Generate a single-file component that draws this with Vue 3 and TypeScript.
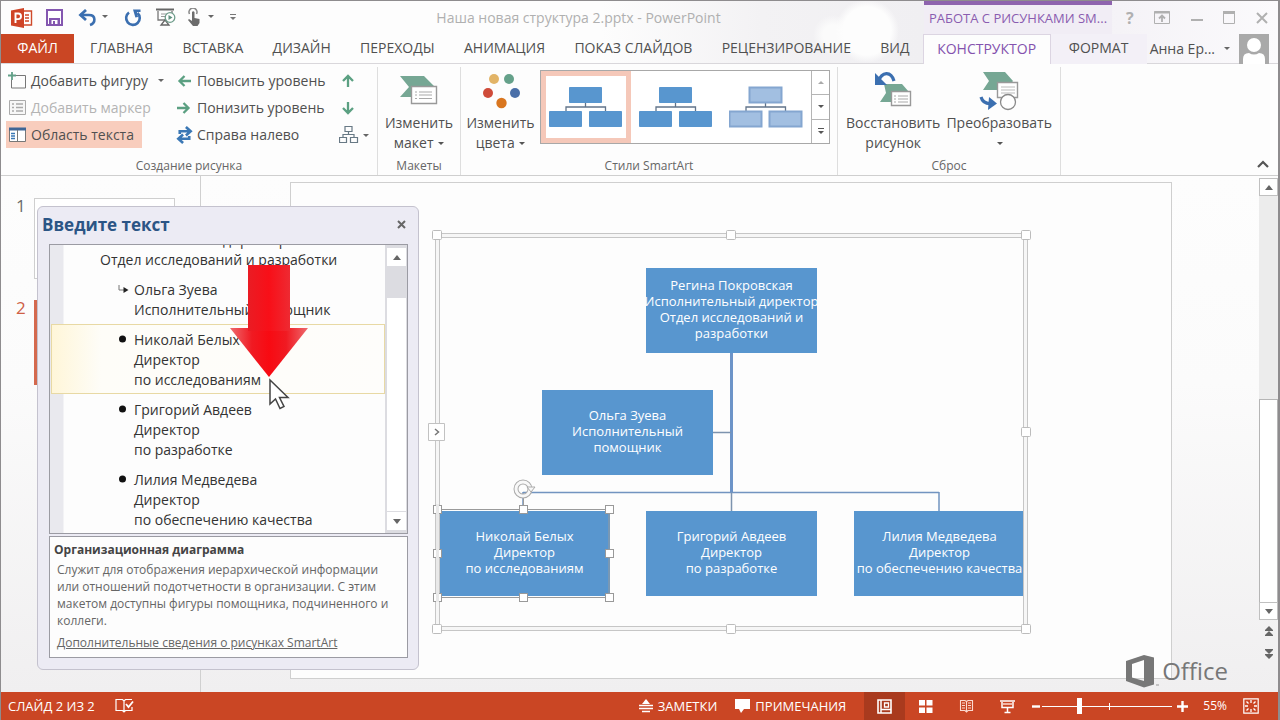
<script setup lang="ts">
import { ref } from 'vue'

interface OrgNode {
  id: string
  x: number
  y: number
  lines: string[]
}

interface OutlineItem {
  kind: 'root' | 'assistant' | 'bullet'
  lines: string[]
  active?: boolean
}

const tabs: string[] = ['ГЛАВНАЯ', 'ВСТАВКА', 'ДИЗАЙН', 'ПЕРЕХОДЫ', 'АНИМАЦИЯ', 'ПОКАЗ СЛАЙДОВ', 'РЕЦЕНЗИРОВАНИЕ', 'ВИД']

const nodes: OrgNode[] = [
  { id: 'head', x: 216, y: 40, lines: ['Регина Покровская', 'Исполнительный директор', 'Отдел исследований и', 'разработки'] },
  { id: 'assistant', x: 112, y: 162, lines: ['Ольга Зуева', 'Исполнительный', 'помощник'] },
  { id: 'research', x: 9, y: 283, lines: ['Николай Белых', 'Директор', 'по исследованиям'] },
  { id: 'development', x: 216, y: 283, lines: ['Григорий Авдеев', 'Директор', 'по разработке'] },
  { id: 'quality', x: 424, y: 283, lines: ['Лилия Медведева', 'Директор', 'по обеспечению качества'] },
]

const outline: OutlineItem[] = [
  { kind: 'root', lines: ['Исполнительный директор', 'Отдел исследований и разработки'] },
  { kind: 'assistant', lines: ['Ольга Зуева', 'Исполнительный помощник'] },
  { kind: 'bullet', lines: ['Николай Белых', 'Директор', 'по исследованиям'], active: true },
  { kind: 'bullet', lines: ['Григорий Авдеев', 'Директор', 'по разработке'] },
  { kind: 'bullet', lines: ['Лилия Медведева', 'Директор', 'по обеспечению качества'] },
]

const frameHandles: number[][] = [[7, 7], [301, 7], [596, 7], [596, 204], [596, 401], [301, 401], [7, 401]]
const nodeHandles: number[][] = [[7, 281], [93, 281], [179, 281], [7, 325], [179, 325], [7, 369], [93, 369], [179, 369]]

const zoom = ref(28)
</script>

<template>
  <div class="window">
    <header class="head">
      <div class="title-row">
        <div class="quick">
          <svg class="app-icon" width="22" height="20" viewBox="0 0 22 20">
            <path d="M11 3h9.500v14H11z" fill="#fff" stroke="#cf4a2b" stroke-width="1.400" />
            <path d="M14 7h4M14 10h4M14 13h4" stroke="#cf4a2b" stroke-width="1.400" />
            <path d="M0 2.500 13 0v20L0 17.500z" fill="#cf4427" />
            <path d="M4.500 15V5.500h2.700a2.800 2.800 0 0 1 0 5.600H4.500" fill="none" stroke="#fff" stroke-width="1.900" />
          </svg>
          <button class="qb save" aria-label="Сохранить">
            <svg width="17" height="17" viewBox="0 0 17 17"><path d="M1 1h15v15H1z" fill="#fff" stroke="#8457b0" stroke-width="2" /><path d="M3 9h11v7H3z" fill="#8457b0" /><path d="M5.500 11h6v4h-6z" fill="#fff" /><path d="M7 12h2v3H7z" fill="#8457b0" /></svg>
          </button>
          <button class="qb undo" aria-label="Отменить">
            <svg width="30" height="18" viewBox="0 0 30 18"><path d="M2 6h9c7 0 7 8 1 10" fill="none" stroke="#3b6fb0" stroke-width="2.600" /><path d="M8 1 2.500 6 8 11" fill="none" stroke="#3b6fb0" stroke-width="2.800" /><path d="M24 6h6l-3 3z" fill="#666" /></svg>
          </button>
          <button class="qb redo" aria-label="Повторить">
            <svg width="18" height="18" viewBox="0 0 18 18"><path d="M5 3.500a6.800 6.800 0 1 0 8.500.5" fill="none" stroke="#3b6fb0" stroke-width="2.600" /><path d="M9 .5h7.500V3h-3.500l1 5-2.600.6z" fill="#3b6fb0" /></svg>
          </button>
          <button class="qb show" aria-label="Показ слайдов">
            <svg width="20" height="19" viewBox="0 0 20 19"><path d="M0 1.500h18" stroke="#666" stroke-width="2" /><path d="M2 3v9h8M16 3v3" fill="none" stroke="#777" stroke-width="1.300" /><path d="M5 6h6M5 8.500h4" stroke="#999" /><path d="m9 12-4 5h8z" fill="none" stroke="#666" stroke-width="1.300" /><circle cx="14" cy="9.500" r="4.800" fill="#fff" stroke="#6f9d8b" stroke-width="1.300" /><path d="m12.500 7 4 2.500-4 2.500z" fill="#5f917e" /></svg>
          </button>
          <button class="qb touch" aria-label="Режим касания">
            <svg width="28" height="19" viewBox="0 0 28 19"><path d="M2.500 6a4 4 0 1 1 7 0" fill="none" stroke="#888" stroke-width="1.500" /><path d="M5 4q1.200-1.500 2.500 0v6l5 1v4l-2 3H6l-5-6 1-1 3 2z" fill="#6c6c6c" /><path d="M21 7h6l-3 3z" fill="#666" /></svg>
          </button>
          <button class="qb more" aria-label="Настроить панель">
            <svg width="6" height="8" viewBox="0 0 6 8"><path d="M0 .5h6" stroke="#777" /><path d="M0 3h6L3 6z" fill="#777" /></svg>
          </button>
        </div>
        <h1 class="doc-title">Наша новая структура 2.pptx - PowerPoint</h1>
        <div class="context-title">РАБОТА С РИСУНКАМИ SM...</div>
        <div class="win-controls">
          <button aria-label="Справка" class="help">?</button>
          <button aria-label="Параметры ленты"><svg width="16" height="13" viewBox="0 0 16 13"><path d="M.5.500h15v12H.5z" fill="none" stroke="#b0b0b0" /><path d="M0 1.500h16" stroke="#b0b0b0" stroke-width="2" /><path d="M8 11V5M5 7.500 8 4.500l3 3" fill="none" stroke="#b0b0b0" stroke-width="1.800" /></svg></button>
          <button aria-label="Свернуть"><svg width="12" height="13" viewBox="0 0 12 13"><path d="M0 9h12" stroke="#b0b0b0" stroke-width="2" /></svg></button>
          <button aria-label="Развернуть"><svg width="12" height="13" viewBox="0 0 12 13"><path d="M.5 1.500h11v11H.5z" fill="none" stroke="#b0b0b0" /><path d="M0 1.500h12" stroke="#b0b0b0" stroke-width="3" /></svg></button>
          <button aria-label="Закрыть"><svg width="12" height="12" viewBox="0 0 12 12"><path d="m1 1 10 10M11 1 1 11" stroke="#b0b0b0" stroke-width="2" /></svg></button>
        </div>
      </div>
      <div class="tab-row">
        <button class="file-tab">ФАЙЛ</button>
        <nav class="tabs">
          <button v-for="tab in tabs" :key="tab" class="tab">{{ tab }}</button>
        </nav>
        <button class="tab design">КОНСТРУКТОР</button>
        <button class="tab format">ФОРМАТ</button>
        <button class="account">
          <span>Анна Ер...</span>
          <svg width="6" height="4" viewBox="0 0 6 4"><path d="M0 0h6L3 3z" fill="#666" /></svg>
          <svg class="avatar" width="30" height="30" viewBox="0 0 30 30"><path d="M0 0h30v30H0z" fill="#a9a9a9" /><circle cx="15" cy="11" r="7" fill="#fff" /><path d="M4 30v-5q0-6 6-6 5 3 10 0 6 0 6 6v5z" fill="#fff" /></svg>
        </button>
      </div>
    </header>

    <section class="ribbon" aria-label="Конструктор">
      <div class="group g-create">
        <div class="create">
          <div class="col col-a">
            <button class="cmd">
              <svg width="19" height="18" viewBox="0 0 19 18"><path d="M3 3.500h14.500v12.500H3.500V8" fill="none" stroke="#777" /><path d="M0 3.500h8M4 0v8" stroke="#fff" stroke-width="3.500" /><path d="M0 3.500h8M4 0v8" stroke="#62a088" stroke-width="1.800" /></svg>
              <span>Добавить фигуру</span>
              <svg class="caret" width="6" height="4" viewBox="0 0 6 4"><path d="M0 0h6L3 3z" fill="#666" /></svg>
            </button>
            <button class="cmd" disabled>
              <svg width="19" height="18" viewBox="0 0 19 18"><path d="M1.500 1.500h16v14h-16z" fill="#f7f7f7" stroke="#aaa" /><path d="M4 5h2M4 8.500h2M4 12h2M8 5h7M8 8.500h7M8 12h7" stroke="#aaa" stroke-width="1.400" /></svg>
              <span>Добавить маркер</span>
            </button>
            <button class="cmd pressed">
              <svg width="19" height="18" viewBox="0 0 19 18"><path d="M1.500 2.500h16v13h-16z" fill="#fff" stroke="#777" /><path d="M1 3h17" stroke="#3f6696" stroke-width="3" /><path d="M9.500 4v12" stroke="#777" /><path d="M3 7.500h4M3 10h4M3 12.500h4" stroke="#3b78b5" stroke-width="1.400" /></svg>
              <span>Область текста</span>
            </button>
          </div>
          <div class="col col-b">
            <button class="cmd"><svg width="15" height="14" viewBox="0 0 15 14"><path d="M14 7H3M7.500 2 2.500 7l5 5" fill="none" stroke="#5ba082" stroke-width="2.300" /></svg><span>Повысить уровень</span></button>
            <button class="cmd"><svg width="15" height="14" viewBox="0 0 15 14"><path d="M0 7h11M6.500 2l5 5-5 5" fill="none" stroke="#5ba082" stroke-width="2.300" /></svg><span>Понизить уровень</span></button>
            <button class="cmd"><svg width="18" height="20" viewBox="0 0 18 20"><path d="M4 9V6h11M10.500 1.500 15.500 6l-5 4.500M14 11v3H3M7.500 9.500 2.500 14l5 4.500" fill="none" stroke="#3b78b5" stroke-width="2.800" /></svg><span>Справа налево</span></button>
          </div>
          <div class="col col-c">
            <button class="cmd" aria-label="Вверх"><svg width="14" height="14" viewBox="0 0 14 14"><path d="M7 13V2M2 7l5-5 5 5" fill="none" stroke="#5ba082" stroke-width="2.300" /></svg></button>
            <button class="cmd" aria-label="Вниз"><svg width="14" height="14" viewBox="0 0 14 14"><path d="M7 1v11M2 7l5 5 5-5" fill="none" stroke="#5ba082" stroke-width="2.300" /></svg></button>
            <button class="cmd layout-cmd" aria-label="Макет диаграммы"><svg width="30" height="18" viewBox="0 0 30 18"><path d="M6 .5h7v5H6zM.5 11.500h7v5h-7zM11.500 11.500h7v5h-7zM9.500 6v2.500M4 11V8.500h11V11" fill="none" stroke="#687985" stroke-width="1.200" /><path d="M24 8h6l-3 3z" fill="#666" /></svg></button>
          </div>
        </div>
        <h2>Создание рисунка</h2>
      </div>

      <div class="group g-layout">
        <button class="big">
          <svg width="38" height="36" viewBox="0 0 38 36"><path d="M0 3h24l10 10v11H0l9-10z" fill="#76a794" /><path d="M11.500 13.500h25v17h-25z" fill="#fff" stroke="#999" stroke-width="1.400" /><path d="M15 19h2M15 22h2M15 25.500h2M19 19h13M19 22h13M19 25.500h13" stroke="#aaa" stroke-width="1.200" /></svg>
          <span>Изменить</span><span>макет <i class="tri"></i></span>
        </button>
        <h2>Макеты</h2>
      </div>

      <div class="group g-styles">
        <div class="styles">
          <button class="big">
            <svg width="38" height="36" viewBox="0 0 38 36"><circle cx="12" cy="6" r="5" fill="#e2b467" /><circle cx="27" cy="6" r="5" fill="#65a18a" /><circle cx="6" cy="20" r="5" fill="#cf4b39" /><circle cx="33" cy="20" r="5" fill="#4a6fa8" /><circle cx="19.500" cy="30" r="5.200" fill="#d9761f" /></svg>
            <span>Изменить</span><span>цвета <i class="tri"></i></span>
          </button>
          <div class="gallery">
            <button v-for="n in 3" :key="n" class="style" :class="{ chosen: n === 1, soft: n === 3 }" :aria-label="'Стиль ' + n">
              <svg width="74" height="44" viewBox="0 0 74 44">
                <path class="wire" d="M36.500 18v4M17 26v-4h39.500v4" fill="none" />
                <path class="box" d="M20.500 2.500h32v15h-32zM.5 26.500h32v15H.5zM40.500 26.500h32v15h-32z" />
              </svg>
            </button>
            <div class="gallery-nav">
              <button disabled aria-label="Предыдущий ряд"><svg width="6" height="4" viewBox="0 0 6 4"><path d="M0 3h6L3 0z" fill="#aaa" /></svg></button>
              <button aria-label="Следующий ряд"><svg width="6" height="4" viewBox="0 0 6 4"><path d="M0 0h6L3 3z" fill="#555" /></svg></button>
              <button aria-label="Все стили"><svg width="6" height="7" viewBox="0 0 6 7"><path d="M0 .5h6" stroke="#555" /><path d="M0 3h6L3 6z" fill="#555" /></svg></button>
            </div>
          </div>
        </div>
        <h2>Стили SmartArt</h2>
      </div>

      <div class="group g-reset">
        <div class="reset">
          <button class="big">
            <svg width="38" height="38" viewBox="0 0 38 38"><path d="M10 12h18l7 8-7 10H6l6-9z" fill="#76a794" /><path d="M17.500 19.500h19v14h-19z" fill="#fff" stroke="#999" stroke-width="1.400" /><path d="M20 24h2M20 27h2M20 30h2M24 24h10M24 27h10M24 30h10" stroke="#aaa" stroke-width="1.200" /><path d="M4 10C8-1 17-1 20 9" fill="none" stroke="#3b6fb0" stroke-width="3.200" /><path d="M1 1v12h12z" fill="#3b6fb0" /></svg>
            <span>Восстановить</span><span>рисунок</span>
          </button>
          <button class="big">
            <svg width="40" height="40" viewBox="0 0 40 40"><path d="M4 1h22l8 9-7 9H4l6-9z" fill="#76a794" /><path d="M18.500 11.500h20v15h-20z" fill="#fff" stroke="#999" stroke-width="1.400" /><path d="M22 16h14M22 19h14M22 22h14" stroke="#bbb" /><circle cx="29" cy="31" r="7.500" fill="#fff" stroke="#8a8a8a" stroke-width="1.300" /><path d="M2 26q2 7 10 6.500" fill="none" stroke="#3b6fb0" stroke-width="3.200" /><path d="m10 26 8 6.500L9 39z" fill="#3b6fb0" /></svg>
            <span>Преобразовать</span><span><i class="tri"></i></span>
          </button>
        </div>
        <h2>Сброс</h2>
      </div>
      <button class="collapse" aria-label="Свернуть ленту"><svg width="12" height="8" viewBox="0 0 12 8"><path d="m1 7 5-5 5 5" fill="none" stroke="#555" stroke-width="2.200" /></svg></button>
    </section>

    <main class="work">
      <ol class="thumbs">
        <li><span>1</span><div class="thumb"></div></li>
        <li class="current"><span>2</span><div class="thumb"></div></li>
      </ol>

      <div class="canvas">
        <div class="slide">
          <div class="diagram">
            <svg class="layer" width="604" height="410" viewBox="0 0 604 410">
              <path d="M301.500 125v140" stroke="#6d94c8" stroke-width="3" />
              <path d="M93 264.500h416M509 264v20M93 264v18" fill="none" stroke="#7294c0" stroke-width="1.500" />
              <path d="M301.500 265v20M283 204.500h18" stroke="#7d93ae" stroke-width="1.500" />
            </svg>
            <div v-for="node in nodes" :key="node.id" class="node" :style="{ left: node.x + 'px', top: node.y + 'px' }">
              <span v-for="line in node.lines" :key="line">{{ line }}</span>
            </div>
            <svg class="layer" width="604" height="410" viewBox="0 0 604 410">
              <path d="M7.500 7.500h588v393H7.500z" fill="none" stroke="#c6c6c6" stroke-width="5" />
              <path d="M7.500 7.500h588v393H7.500z" fill="none" stroke="#f6f6f6" stroke-width="3" />
              <path d="M7 281.500h172v88H7M93.500 270v10" fill="none" stroke="#9a9a9a" />
              <rect v-for="(h, i) in nodeHandles" :key="'n' + i" :x="h[0] - 3.500" :y="h[1] - 3.500" width="8" height="8" fill="#fff" stroke="#999" />
              <path d="M7.500 276v98" stroke="#e9e9e9" stroke-width="3" />
              <rect v-for="(h, i) in frameHandles" :key="'f' + i" :x="h[0] - 4.500" :y="h[1] - 4.500" width="9" height="9" rx="1" fill="#fff" stroke="#bcbcbc" />
              <circle cx="93" cy="261" r="7" fill="none" stroke="#aaa" stroke-width="5" />
              <circle cx="93" cy="261" r="7" fill="none" stroke="#f8f8f8" stroke-width="3" />
              <path d="M97 259h8l-4 5z" fill="#f8f8f8" stroke="#aaa" />
              <path d="M-1.500 195.500h16v17h-16z" fill="#fff" stroke="#c2c2c2" />
              <path d="m5 201 3.500 3-3.500 3" fill="none" stroke="#777" stroke-width="1.500" />
            </svg>
          </div>
        </div>
      </div>

      <div class="scroll">
        <button class="sb" aria-label="Вверх"><svg width="8" height="5" viewBox="0 0 8 5"><path d="M0 5h8L4 0z" fill="#666" /></svg></button>
        <div class="track"><div class="grip"></div></div>
        <button class="sb" aria-label="Вниз"><svg width="8" height="5" viewBox="0 0 8 5"><path d="M0 0h8L4 5z" fill="#666" /></svg></button>
        <button class="jump" aria-label="Предыдущий слайд"><svg width="10" height="11" viewBox="0 0 10 11"><path d="m5 0 4 4H1zM5 5l4 4H1z" fill="#666" /><path d="M1 4.500h8M1 9.500h8" stroke="#666" /></svg></button>
        <button class="jump" aria-label="Следующий слайд"><svg width="10" height="11" viewBox="0 0 10 11"><path d="M1 2h8L5 6zM1 7h8l-4 4z" fill="#666" /><path d="M1 1.500h8M1 6.500h8" stroke="#666" /></svg></button>
      </div>

      <aside class="pane">
        <div class="pane-head">
          <h2>Введите текст</h2>
          <button aria-label="Закрыть область текста"><svg width="9" height="9" viewBox="0 0 9 9"><path d="m1 1 7 7M8 1 1 8" stroke="#666" stroke-width="2" /></svg></button>
        </div>
        <div class="outline">
          <ul>
            <li v-for="item in outline" :key="item.lines[0]" :class="[item.kind, { active: item.active }]">
              <svg v-if="item.kind === 'bullet'" class="mark" width="14" height="20" viewBox="0 0 14 20"><circle cx="4" cy="9" r="3.500" fill="#111" /></svg>
              <svg v-if="item.kind === 'assistant'" class="mark" width="14" height="20" viewBox="0 0 14 20"><path d="M.5 5v5H7" fill="none" stroke="#777" /><path d="m5 7 5 3-5 3z" fill="#222" /></svg>
              <div><span v-for="line in item.lines" :key="line">{{ line }}</span></div>
            </li>
          </ul>
          <div class="pane-scroll">
            <button aria-label="Прокрутить вверх"><svg width="8" height="5" viewBox="0 0 8 5"><path d="M0 5h8L4 0z" fill="#666" /></svg></button>
            <div class="pane-grip"></div>
            <button aria-label="Прокрутить вниз"><svg width="8" height="5" viewBox="0 0 8 5"><path d="M0 0h8L4 5z" fill="#666" /></svg></button>
          </div>
        </div>
        <div class="about">
          <h3>Организационная диаграмма</h3>
          <p>Служит для отображения иерархической информации или отношений подотчетности в организации. С этим макетом доступны фигуры помощника, подчиненного и коллеги.</p>
          <a href="#">Дополнительные сведения о рисунках SmartArt</a>
        </div>
        <svg class="pointer" width="82" height="148" viewBox="0 0 82 148">
          <defs>
            <linearGradient id="red" x1="0" x2="1" y1="0" y2="0">
              <stop offset="0" stop-color="#ee6a6e" /><stop offset=".28" stop-color="#f01a22" /><stop offset=".5" stop-color="#f80a12" /><stop offset=".72" stop-color="#f01a22" /><stop offset="1" stop-color="#ee6a6e" />
            </linearGradient>
            <linearGradient id="shaft" x1="0" x2="1" y1="0" y2="0">
              <stop offset="0" stop-color="#ea1c24" /><stop offset=".5" stop-color="#f80f18" /><stop offset="1" stop-color="#ee2a32" />
            </linearGradient>
          </defs>
          <path d="M1 63h78L40 112z" fill="url(#red)" />
          <path d="M19 0h42v66H19z" fill="url(#shaft)" />
          <path d="M41 115v24l5.500-5 4.500 9.500 4-2-4.500-9H59z" fill="#fff" stroke="#444" stroke-width="1.500" />
        </svg>
      </aside>

      <div class="brand">
        <svg width="34" height="34" viewBox="0 0 34 34"><path fill-rule="evenodd" d="M0 7 18 1l10 2.500v27L18 33.500 0 27zM6 10v13.500L18 27V6z" fill="#777" /><path d="M30 31h3" stroke="#999" /></svg>
        <span>Office</span>
      </div>
    </main>

    <footer class="status">
      <span class="slide-no">СЛАЙД 2 ИЗ 2</span>
      <button class="proof" aria-label="Орфография"><svg width="19" height="16" viewBox="0 0 19 16"><path d="M9 3 7.500 1.500H1v11h6.500L9 14l1.500-1.500H17V9M9 3v11M9 3l1.500-1.500H17" fill="none" stroke="#fff" stroke-width="1.200" /><path d="m11 6 2.500 3L18 3.500" fill="none" stroke="#fff" stroke-width="1.800" /></svg></button>
      <div class="spacer"></div>
      <button class="notes"><svg width="14" height="14" viewBox="0 0 14 14"><path d="m7 0 4 5H3z" fill="#fff" /><path d="M0 6.500h14M0 9.500h14M3 12.500h8" stroke="#fff" stroke-width="1.300" /></svg><span>ЗАМЕТКИ</span></button>
      <button class="comments"><svg width="15" height="16" viewBox="0 0 15 16"><path d="M0 1h15v10H9l-3 4-2-4H0z" fill="#fff" /></svg><span>ПРИМЕЧАНИЯ</span></button>
      <button class="view on" aria-label="Обычный"><svg width="15" height="15" viewBox="0 0 15 15"><path d="M1 1h13v13H1z" fill="none" stroke="#fff" stroke-width="1.600" /><path d="M4 1v13M4 10.500h10" stroke="#fff" stroke-width="1.500" /><path d="M7.500 4h4v4h-4z" fill="none" stroke="#fff" stroke-width="1.300" /></svg></button>
      <button class="view" aria-label="Сортировщик"><svg width="15" height="15" viewBox="0 0 15 15"><path d="M1 1h6v5.500H1zM8.500 1h6v5.500h-6zM1 8.500h6V14H1zM8.500 8.500h6V14h-6z" fill="#fff" /></svg></button>
      <button class="view" aria-label="Чтение"><svg width="15" height="15" viewBox="0 0 15 15"><path d="M7.500 2.500 6 1.500H1.500v10H6l1.500 1.500L9 11.500h4.500v-10H9zM7.500 2.500v11M3 4h3M3 6.500h3M3 9h3M9 4h3M9 6.500h3M9 9h3" fill="none" stroke="#fbd9cf" stroke-width="1.100" /></svg></button>
      <button class="view" aria-label="Показ"><svg width="15" height="15" viewBox="0 0 15 15"><path d="M0 2h15" stroke="#fff" stroke-width="1.500" /><path d="M2 3v5.500h11V3M7.500 9v4M4.500 13.500h6" fill="none" stroke="#fff" stroke-width="1.500" /><path d="M3 5h9" stroke="#f2b5a5" stroke-width="2" /></svg></button>
      <button class="step minus" aria-label="Уменьшить"><svg width="11" height="11" viewBox="0 0 11 11"><path d="M1 5.500h8" stroke="#fff" stroke-width="2.400" /></svg></button>
      <input v-model="zoom" class="zoom" type="range" min="0" max="100" aria-label="Масштаб" />
      <button class="step plus" aria-label="Увеличить"><svg width="11" height="11" viewBox="0 0 11 11"><path d="M0 5.500h11M5.500 0v11" stroke="#fff" stroke-width="2.400" /></svg></button>
      <span class="percent">55%</span>
      <button class="fit" aria-label="Вписать"><svg width="16" height="16" viewBox="0 0 16 16"><path d="M.8.800h14.400v14.400H.8z" fill="none" stroke="#fff" stroke-width="1.200" /><path d="M8 2v3M8 11v3M2 8h3M11 8h3M3.500 3.500l2 2M12.500 3.500l-2 2M3.500 12.500l2-2M12.500 12.500l-2-2" stroke="#fff" stroke-width="1.300" /></svg></button>
    </footer>
  </div>
</template>

<style>
body {
  margin: 0;
}
</style>

<style scoped>
* {
  box-sizing: border-box;
}
.window {
  display: flex;
  flex-direction: column;
  min-height: 100vh;
  border: 1px solid #8e8c8e;
  border-right-width: 2px;
  border-bottom: 0;
  background: #fdfdfd;
  color: #505050;
  font: 14px/20px "Open Sans", "Noto Sans", sans-serif;
}
button {
  display: flex;
  align-items: center;
  padding: 0;
  border: 0;
  background: none;
  color: inherit;
  font: inherit;
  white-space: nowrap;
}
svg {
  display: block;
  flex: none;
}
h1, h2, h3, p, ul, ol {
  margin: 0;
  padding: 0;
  font-weight: 400;
  list-style: none;
}

/* Title bar and tabs */
.head {
  background:
    radial-gradient(circle at 866px 30px, #fdfdfd 0 24px, transparent 32px),
    radial-gradient(circle at 832px 34px, #fbfbfb 0 10px, transparent 20px),
    linear-gradient(90deg, #fdfdfd 600px, #f3f2f4 760px, #f0eff2 920px, #f5f3f7 1120px, #fbfafc);
}
.title-row {
  display: flex;
  height: 33px;
}
.quick {
  display: flex;
  align-items: center;
  width: 255px;
  padding-left: 10px;
}
.save { margin-left: 13px; }
.undo { margin-left: 15px; }
.redo { margin-left: 16px; }
.show { margin-left: 14px; }
.touch { margin-left: 11px; }
.more { margin-left: 15px; }
.doc-title {
  flex: 1;
  padding-right: 23px;
  color: #b0b0b0;
  font-size: 14px;
  line-height: 33px;
  text-align: center;
}
.context-title {
  width: 188px;
  border-top: 4px solid #8e63ae;
  background: #f1edf5;
  color: #8a5cb0;
  font-size: 13px;
  line-height: 27px;
  text-align: center;
}
.win-controls {
  display: flex;
  align-items: center;
  justify-content: space-between;
  width: 166px;
  padding: 0 10px 0 14px;
  color: #b0b0b0;
}
.help {
  font-size: 16px;
  font-weight: 700;
}
.tab-row {
  display: flex;
  height: 30px;
  border-bottom: 1px solid #d9d7db;
}
.file-tab {
  justify-content: center;
  width: 73px;
  padding-bottom: 2px;
  background: #ca4624;
  color: #fff;
}
.tabs {
  display: flex;
  flex: 1;
  justify-content: space-between;
  padding: 0 13px 0 16px;
}
.tab {
  height: 30px;
  padding-bottom: 2px;
}
.design {
  justify-content: center;
  width: 128px;
  border: 1px solid #dcd5e2;
  border-bottom: 0;
  background: #fdfdfd;
  color: #8452ae;
}
.format {
  justify-content: center;
  width: 96px;
  background: #f3f0f7;
}
.account {
  gap: 9px;
  padding: 0 9px 0 3px;
}

/* Ribbon */
.ribbon {
  display: flex;
  height: 112px;
  border-bottom: 1px solid #cfcfcf;
}
.group {
  display: flex;
  flex-direction: column;
  justify-content: space-between;
  margin: 3px 0 0;
  border-right: 1px solid #dedede;
}
.group h2 {
  color: #666;
  font-size: 12px;
  line-height: 18px;
  text-align: center;
}
.g-create { width: 377px; }
.g-layout { width: 83px; }
.g-styles { width: 377px; }
.g-reset { width: 223px; }
.create {
  display: flex;
  padding-left: 5px;
}
.col {
  display: flex;
  flex-direction: column;
}
.cmd {
  height: 27px;
  gap: 4px;
}
.cmd:disabled {
  color: #b4b4b4;
}
.col-a {
  width: 170px;
}
.col-a .cmd {
  padding-left: 2px;
}
.cmd .caret {
  margin-left: 6px;
}
.col-a .pressed {
  width: 136px;
  background: #f8cdbd;
}
.col-b {
  width: 165px;
}
.col-b .cmd svg {
  width: 17px;
}
.layout-cmd {
  margin-left: -2px;
}
.big {
  flex-direction: column;
  padding-top: 4px;
}
.big svg {
  height: 40px;
  margin-bottom: 2px;
}
.g-layout .big {
  width: 100%;
}
.tri {
  display: inline-block;
  margin: 0 0 3px 1px;
  border: 3px solid transparent;
  border-top-color: #555;
  border-bottom: 0;
}
.styles {
  display: flex;
}
.styles .big {
  width: 79px;
}
.gallery {
  display: grid;
  grid-template-columns: repeat(3, 1fr) 18px;
  width: 290px;
  height: 74px;
  margin-top: 3px;
  border: 1px solid #a8a8a8;
  background: #fff;
}
.style {
  justify-content: center;
}
.style.chosen {
  border: 5px solid #f5c8b9;
}
.box {
  fill: #5896cf;
  stroke: #5896cf;
}
.wire {
  stroke: #62748a;
  stroke-width: 1.3;
}
.soft .box {
  fill: #a2bfe1;
  stroke: #84a6d0;
  stroke-width: 2;
}
.gallery-nav {
  display: flex;
  flex-direction: column;
  border-left: 1px solid #b5b5b5;
}
.gallery-nav button {
  flex: 1;
  justify-content: center;
}
.gallery-nav button + button {
  border-top: 1px solid #b5b5b5;
}
.reset {
  display: flex;
  justify-content: center;
  gap: 6px;
}
.collapse {
  align-self: flex-end;
  margin: 0 9px 7px auto;
}

/* Work area */
.work {
  position: relative;
  display: flex;
  flex: 1;
  background: linear-gradient(#fdfdfd, #fbfbfb 40%, #f0eff0);
}
.thumbs {
  width: 200px;
  padding-top: 22px;
  border-right: 1px solid #d0d0d0;
}
.thumbs li {
  display: flex;
  gap: 8px;
  height: 102px;
  padding-left: 15px;
  color: #6b6b6b;
  font-size: 17px;
  line-height: 16px;
}
.thumb {
  width: 141px;
  height: 81px;
  border: 1px solid #cfcfcf;
  background: #fff;
}
.current .thumb {
  height: 85px;
  border: 3px solid #d4694e;
}
.thumbs .current {
  color: #cf5f45;
}
.canvas {
  flex: 1;
  padding: 6px 87px 11px 89px;
}
.slide {
  position: relative;
  min-height: 497px;
  border: 1px solid #cfcfcf;
  background: #fdfdfd;
}
.diagram {
  position: absolute;
  left: 139px;
  top: 45px;
  width: 604px;
  height: 410px;
}
.layer {
  position: absolute;
  left: 0;
  top: 0;
  overflow: visible;
}
.node {
  position: absolute;
  display: flex;
  flex-direction: column;
  align-items: center;
  justify-content: center;
  width: 171px;
  height: 85px;
  padding-bottom: 4px;
  background: #5896cf;
  color: #fff;
  font-size: 13px;
  line-height: 16px;
  white-space: nowrap;
}
.scroll {
  display: flex;
  flex-direction: column;
  width: 19px;
  padding: 2px 0 28px;
}
.sb {
  justify-content: center;
  height: 18px;
  border: 1px solid #c0c0c0;
  background: #fff;
}
.track {
  display: flex;
  flex: 1;
  flex-direction: column;
  justify-content: flex-end;
  background: #ececec;
}
.grip {
  height: 50%;
  border: 1px solid #b5b5b5;
  border-bottom: 0;
  background: #fff;
}
.jump {
  justify-content: center;
  height: 22px;
}

/* Floating text pane */
.pane {
  position: absolute;
  left: 36px;
  top: 30px;
  width: 382px;
  padding: 2px 10px 11px 11px;
  border: 1px solid #c4c2ce;
  border-radius: 6px;
  background: #ecebf4;
}
.pane-head {
  display: flex;
  align-items: center;
  justify-content: space-between;
  height: 35px;
  margin-left: -7px;
  padding: 0 2px 4px 0;
}
.pane-head h2 {
  color: #2b5585;
  font-size: 17px;
  font-weight: 700;
}
.outline {
  display: flex;
  height: 290px;
  overflow: hidden;
  border: 1px solid #9b9ba3;
  background: linear-gradient(90deg, #e9e9ee 13px, #fdfdfd 14px);
  color: #333;
}
.outline ul {
  flex: 1;
  margin-top: -21px;
  padding-left: 1px;
}
.outline li {
  display: flex;
  padding: 6px 0 4px 66px;
}
.outline li.root {
  padding-left: 49px;
}
.outline li span {
  display: block;
}
.mark {
  width: 17px;
}
.outline li.active {
  background: linear-gradient(90deg, #fff6d8, #fefdf8 50px, #fefdfb);
  box-shadow: inset 0 0 0 1px #e8d9a4;
}
.pane-scroll {
  display: flex;
  flex-direction: column;
  width: 22px;
  padding: 3px 1px 3px 2px;
  background: #dcdce1;
}
.pane-scroll button {
  justify-content: center;
  height: 18px;
  background: #fff;
}
.pane-grip {
  flex: 1;
  margin: 32px 0 1px;
  background: #fff;
}
.about {
  margin-top: 2px;
  padding: 4px 4px 6px;
  border: 1px solid #9b9ba3;
  background: #fdfdfd;
  color: #666;
  font-size: 12px;
  line-height: 17px;
}
.about h3 {
  color: #444;
  font-size: 12px;
  font-weight: 700;
}
.about p {
  margin: 3px 0 5px 3px;
}
.about a {
  margin-left: 3px;
  color: inherit;
}
.pointer {
  position: absolute;
  left: 191px;
  top: 58px;
}
.brand {
  position: absolute;
  right: 50px;
  bottom: 4px;
  display: flex;
  align-items: center;
  gap: 2px;
  color: #777;
  font-size: 24px;
  line-height: 34px;
}

/* Status bar */
.status {
  display: flex;
  align-items: center;
  height: 28px;
  padding: 0 19px 0 7px;
  background: #ca4624;
  color: #fff;
  font-size: 13px;
}
.status button {
  height: 28px;
}
.proof {
  margin-left: 20px;
}
.spacer {
  flex: 1;
}
.notes, .comments {
  gap: 5px;
}
.comments {
  margin: 0 18px;
}
.view {
  justify-content: center;
  width: 41px;
}
.view.on {
  background: #a93a1e;
}
.minus {
  margin-left: 3px;
}
.plus {
  margin: 0 5px;
}
.zoom {
  width: 130px;
  height: 20px;
  margin: 0;
  appearance: none;
  background:
    linear-gradient(#fff, #fff) 67px center / 1px 7px no-repeat,
    linear-gradient(#fff, #fff) center / 100% 1px no-repeat;
}
.zoom::-webkit-slider-thumb {
  width: 5px;
  height: 16px;
  appearance: none;
  background: #fff;
}
.percent {
  margin: 0 16px 0 10px;
  font-size: 12px;
}
</style>
